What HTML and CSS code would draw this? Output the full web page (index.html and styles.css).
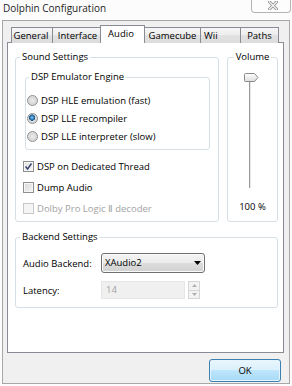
FILE: index.html
```html
<!DOCTYPE html>
<html>
<head>
<meta charset="utf-8">
<link rel="stylesheet" href="styles.css">
</head>
<body>
<div class="titlebar">
  <span class="title">Dolphin Configuration</span>
  <span class="close">
    <svg width="10" height="9" viewBox="0 0 10 9">
      <path d="M1.5 1 L8.5 8 M8.5 1 L1.5 8" stroke="#8f8f8f" stroke-width="3" stroke-linecap="square"/>
      <path d="M1.5 1 L8.5 8 M8.5 1 L1.5 8" stroke="#f4f4f4" stroke-width="1.3" stroke-linecap="square"/>
    </svg>
  </span>
</div>
<div class="frame">
  <div class="tabs">
    <div class="tab t-general">General</div>
    <div class="tab t-interface">Interface</div>
    <div class="tab t-audio sel">Audio</div>
    <div class="tab t-gamecube">Gamecube</div>
    <div class="tab t-wii">Wii</div>
    <div class="tab t-paths">Paths</div>
  </div>
  <div class="panel">
    <div class="top">
      <fieldset class="group sound">
        <legend>Sound Settings</legend>
        <fieldset class="group engine">
          <legend>DSP Emulator Engine</legend>
          <div class="opt radio-row"><span class="radio"></span>DSP HLE emulation (fast)</div>
          <div class="opt radio-row"><span class="radio on"></span>DSP LLE recompiler</div>
          <div class="opt radio-row"><span class="radio"></span>DSP LLE interpreter (slow)</div>
        </fieldset>
        <div class="opt check-row"><span class="check on"><svg width="9" height="9" viewBox="0 0 9 9"><path d="M1.5 4.5 L3.6 7 L7.5 1.5" fill="none" stroke="#3a4670" stroke-width="1.5"/></svg></span>DSP on Dedicated Thread</div>
        <div class="opt check-row"><span class="check"></span>Dump Audio</div>
        <div class="opt check-row disabled"><span class="check"></span>Dolby Pro Logic Ⅱ decoder</div>
      </fieldset>
      <fieldset class="group volume">
        <legend>Volume</legend>
        <div class="vol-inner">
          <svg class="slider" width="49" height="116" viewBox="0 0 49 116">
            <defs>
              <linearGradient id="thumb" x1="0" y1="0" x2="0" y2="1">
                <stop offset="0" stop-color="#ffffff"/>
                <stop offset="1" stop-color="#dcdcdc"/>
              </linearGradient>
            </defs>
            <line x1="21.5" y1="8" x2="21.5" y2="115" stroke="#9a9a9a" stroke-width="1"/>
            <line x1="22.5" y1="9" x2="22.5" y2="115" stroke="#e8e8e8" stroke-width="1"/>
            <path d="M17.5 0.5 H26.5 L30 4.5 L26.5 8.5 H17.5 Q16.5 8.5 16.5 7.5 V1.5 Q16.5 0.5 17.5 0.5 Z" fill="url(#thumb)" stroke="#8a8a8a" stroke-width="1"/>
          </svg>
          <div class="vol-label">100 %</div>
        </div>
      </fieldset>
    </div>
    <fieldset class="group backend">
      <legend>Backend Settings</legend>
      <div class="form">
        <span class="lbl">Audio Backend:</span>
        <div class="combo"><span>XAudio2</span><svg width="7" height="4" viewBox="0 0 7 4"><path d="M0 0 H7 L3.5 4 Z" fill="#000"/></svg></div>
        <span class="lbl">Latency:</span>
        <div class="spin">
          <div class="spin-field">14</div>
          <div class="spin-btns">
            <div class="spin-btn"><svg width="5" height="3" viewBox="0 0 5 3"><path d="M0 3 H5 L2.5 0 Z" fill="#b0b0b0"/></svg></div>
            <div class="spin-btn"><svg width="5" height="3" viewBox="0 0 5 3"><path d="M0 0 H5 L2.5 3 Z" fill="#b0b0b0"/></svg></div>
          </div>
        </div>
      </div>
    </fieldset>
  </div>
  <div class="footer">
    <button class="ok">OK</button>
  </div>
</div>
</body>
</html>
```
FILE: styles.css
```css
html, body {
  margin: 0;
  padding: 0;
}
body {
  width: 292px;
  height: 386px;
  background: #fcfcfc;
  font-family: "Open Sans", "Noto Sans", "DejaVu Sans", sans-serif;
  font-size: 9.5px;
  color: #000;
  overflow: hidden;
}
.titlebar {
  height: 20px;
  display: flex;
  justify-content: space-between;
  align-items: flex-start;
}
.title {
  font-size: 10px;
  line-height: 17px;
  padding-left: 3px;
  color: #1e1e1e;
}
.close {
  width: 40px;
  height: 13px;
  box-sizing: border-box;
  margin-right: 1px;
  border: 1px solid #b4b4b4;
  border-top: none;
  border-radius: 0 0 4px 4px;
  background: #fdfdfd;
  display: flex;
  align-items: center;
  justify-content: center;
  padding-left: 4px;
  padding-bottom: 1px;
}
.close svg { display: block; }
.frame {
  margin: 0 2px 2px 2px;
  border: 1px solid #a7a7a7;
  background: #f0f0f0;
  padding: 4px 5px 1px 4px;
  height: 364px;
  box-sizing: border-box;
}
.tabs {
  display: flex;
  align-items: flex-end;
  height: 18px;
  padding-left: 4px;
  margin-bottom: -1px;
}
.tab {
  height: 16px;
  box-sizing: border-box;
  border: 1px solid #898c95;
  border-bottom: none;
  background: linear-gradient(#f6f6f6, #ececec 50%, #e2e2e2 50%, #dcdcdc);
  line-height: 15px;
  text-align: center;
  margin-left: -1px;
  white-space: nowrap;
}
.t-general { width: 42px; margin-left: 0; padding-right: 2px; }
.t-interface { width: 49px; padding-left: 2px; }
.t-audio { width: 45px; padding-right: 3px; }
.t-gamecube { width: 57px; }
.t-wii { width: 41px; text-align: left; padding-left: 3px; }
.t-paths { width: 39px; }
.tab.sel {
  height: 18px;
  background: #fff;
  position: relative;
  z-index: 1;
  line-height: 15px;
}
.panel {
  height: 311px;
  box-sizing: border-box;
  border: 1px solid #898c95;
  background: #fff;
  padding: 7px 5px 0 7px;
}
.top {
  display: grid;
  grid-template-columns: 204px 51px;
  column-gap: 8px;
}
.group {
  margin: 0;
  border: 1px solid #d5dfe5;
  border-radius: 3px;
  min-width: 0;
}
.group legend {
  line-height: 14px;
  padding: 0 2px;
}
.sound {
  padding: 6px 7px 2px 7px;
}
.sound > legend { margin-left: -3px; }
.engine {
  margin: 0 1px 6px 2px;
  padding: 7px 0 4px 1px;
}
.engine > legend { margin-left: 2px; }
.opt {
  display: flex;
  align-items: center;
  white-space: nowrap;
}
.radio-row { height: 18px; }
.check-row { height: 21px; }
.radio {
  width: 11px;
  height: 11px;
  box-sizing: border-box;
  border-radius: 50%;
  border: 1px solid #8e8f8f;
  background: radial-gradient(circle at 50% 50%, #ececec 0, #d6d6d6 60%, #f4f4f4 100%);
  margin-right: 3px;
  flex: none;
}
.radio.on {
  background:
    radial-gradient(circle at 45% 40%, #8fd0f8 0, #2d77b2 2px, #1b4f7c 3px, transparent 3.3px),
    radial-gradient(circle at 50% 50%, #ececec 0, #d6d6d6 60%, #f4f4f4 100%);
}
.check {
  width: 11px;
  height: 11px;
  box-sizing: border-box;
  border: 1px solid #8e8f8f;
  background: linear-gradient(135deg, #d8d8d8, #f4f4f4);
  box-shadow: inset 0 0 0 1px #f6f6f6;
  margin-right: 3px;
  flex: none;
  display: flex;
  align-items: center;
  justify-content: center;
}
.check svg { display: block; }
.check.on { background: linear-gradient(135deg, #e0e0e0, #f8f8f8); }
.disabled { color: #a3a3a3; }
.disabled .check {
  border-color: #c8c8c8;
  background: #f4f4f4;
}
.volume {
  padding: 0;
}
.volume > legend {
  margin: 0 auto;
}
.vol-inner {
  display: flex;
  flex-direction: column;
  align-items: center;
  padding-top: 9px;
}
.slider { display: block; }
.vol-label {
  line-height: 14px;
  margin-top: 11px;
}
.backend {
  margin-top: 8px;
  padding: 9px 7px 8px 7px;
}
.backend > legend { margin-left: -3px; }
.form {
  display: grid;
  grid-template-columns: 78px auto;
  grid-template-rows: 20px 18px;
  row-gap: 8px;
  align-items: center;
}
.combo {
  width: 104px;
  height: 20px;
  box-sizing: border-box;
  border: 1px solid #707070;
  border-radius: 3px;
  background: linear-gradient(#f4f4f4, #ebebeb 50%, #dddddd 50%, #d0d0d0);
  box-shadow: inset 0 0 0 1px #fbfbfb;
  display: flex;
  align-items: center;
  justify-content: space-between;
  padding: 0 3px 0 3px;
}
.combo span { line-height: 16px; }
.combo svg { display: block; }
.spin {
  display: flex;
  align-items: stretch;
  height: 18px;
}
.spin-field {
  width: 84px;
  box-sizing: border-box;
  background: #f0f0f0;
  border: 1px solid #e6e6e6;
  color: #a0a0a0;
  line-height: 16px;
  padding-left: 4px;
}
.spin-btns {
  margin-left: 3px;
  width: 12px;
  display: flex;
  flex-direction: column;
}
.spin-btn {
  flex: 1;
  box-sizing: border-box;
  border: 1px solid #d5d5d5;
  background: #f3f3f3;
  display: flex;
  align-items: center;
  justify-content: center;
}
.spin-btn + .spin-btn { border-top: none; }
.spin-btn svg { display: block; }
.footer {
  display: flex;
  justify-content: flex-end;
  padding-top: 6px;
  padding-right: 3px;
}
.ok {
  width: 72px;
  height: 23px;
  box-sizing: border-box;
  margin: 0;
  border: 1px solid #3c7fb1;
  border-radius: 3px;
  background: linear-gradient(#eaf6fd, #d9f0fc 50%, #bee6fd 50%, #a7d9f5);
  box-shadow: inset 0 0 0 1px #e6f5fd;
  font-family: "Open Sans", "Noto Sans", sans-serif;
  font-size: 9.5px;
  color: #000;
  padding: 0;
}
```
